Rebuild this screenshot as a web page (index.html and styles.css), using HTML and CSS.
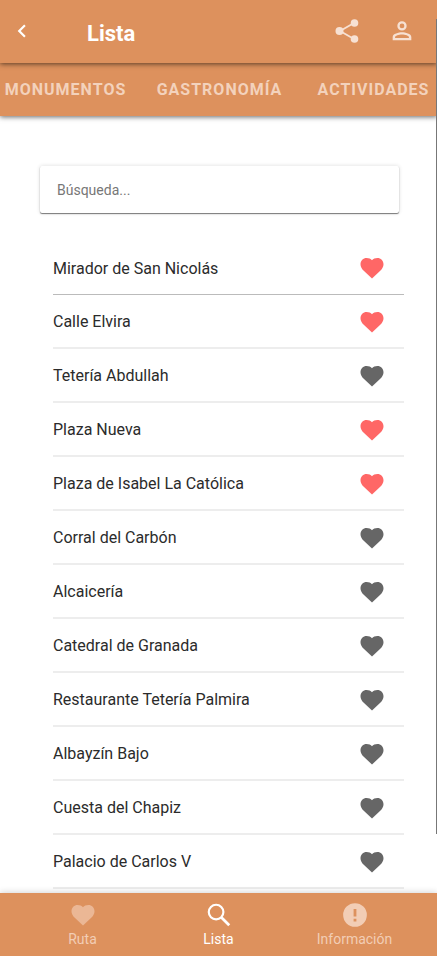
FILE: index.html
```html
<!DOCTYPE html>
<html lang="es">
<head>
<meta charset="utf-8">
<meta name="viewport" content="width=device-width, initial-scale=1">
<title>Lista</title>
<link rel="stylesheet" href="styles.css">
</head>
<body>
<svg class="defs" aria-hidden="true">
  <symbol id="heart" viewBox="0 0 28 28"><path d="M14 24.500L5.500 16.500C3.700 14.700 2.500 12.600 2.500 10.200C2.500 6.700 5.200 4 8.600 4C10.800 4 12.800 4.800 14 6.300C15.200 4.800 17.200 4 19.400 4C22.800 4 25.500 6.700 25.500 10.200C25.500 12.600 24.300 14.700 22.500 16.500Z"/></symbol>
</svg>
<div class="app">
  <header class="toolbar">
    <button class="icon-button" aria-label="Volver"><svg class="icon-back" viewBox="0 0 24 24"><path d="M15.41 7.41L14 6l-6 6 6 6 1.41-1.41L10.83 12z"/></svg></button>
    <h1 class="title">Lista</h1>
    <button class="icon-button" aria-label="Compartir"><svg class="icon-share" viewBox="0 0 24 24"><path d="M5 12L19 4M5 12l14 8" fill="none" stroke="currentColor" stroke-width="1.8"/><circle cx="4.5" cy="12" r="4"/><circle cx="19.5" cy="4" r="3.8"/><circle cx="19.5" cy="20" r="3.8"/></svg></button>
    <button class="icon-button" aria-label="Perfil"><svg class="icon-user" viewBox="0 0 24 24"><path fill-rule="evenodd" d="M12 3a4.3 4.3 0 110 8.6A4.3 4.3 0 0112 3zm0 2.1a2.2 2.2 0 100 4.4 2.2 2.2 0 000-4.4zM12 13.2c-3 0-8.6 1.4-8.6 4.3v3h17.2v-3c0-2.9-5.6-4.3-8.6-4.3zm0 2c3 0 6.4 1.3 6.4 2.3v1H5.6v-1c0-1 3.4-2.3 6.4-2.3z"/></svg></button>
  </header>
  <nav class="tabs" aria-label="Categorías">
    <button class="tab">MONUMENTOS</button>
    <button class="tab">GASTRONOMÍA</button>
    <button class="tab">ACTIVIDADES</button>
  </nav>
  <main class="content">
    <input class="search" type="search" placeholder="Búsqueda..." aria-label="Búsqueda">
    <ul class="places">
      <li class="place"><span>Mirador de San Nicolás</span><button class="like liked" aria-label="Favorito"><svg class="heart"><use href="#heart"/></svg></button></li>
      <li class="place"><span>Calle Elvira</span><button class="like liked" aria-label="Favorito"><svg class="heart"><use href="#heart"/></svg></button></li>
      <li class="place"><span>Tetería Abdullah</span><button class="like" aria-label="Favorito"><svg class="heart"><use href="#heart"/></svg></button></li>
      <li class="place"><span>Plaza Nueva</span><button class="like liked" aria-label="Favorito"><svg class="heart"><use href="#heart"/></svg></button></li>
      <li class="place"><span>Plaza de Isabel La Católica</span><button class="like liked" aria-label="Favorito"><svg class="heart"><use href="#heart"/></svg></button></li>
      <li class="place"><span>Corral del Carbón</span><button class="like" aria-label="Favorito"><svg class="heart"><use href="#heart"/></svg></button></li>
      <li class="place"><span>Alcaicería</span><button class="like" aria-label="Favorito"><svg class="heart"><use href="#heart"/></svg></button></li>
      <li class="place"><span>Catedral de Granada</span><button class="like" aria-label="Favorito"><svg class="heart"><use href="#heart"/></svg></button></li>
      <li class="place"><span>Restaurante Tetería Palmira</span><button class="like" aria-label="Favorito"><svg class="heart"><use href="#heart"/></svg></button></li>
      <li class="place"><span>Albayzín Bajo</span><button class="like" aria-label="Favorito"><svg class="heart"><use href="#heart"/></svg></button></li>
      <li class="place"><span>Cuesta del Chapiz</span><button class="like" aria-label="Favorito"><svg class="heart"><use href="#heart"/></svg></button></li>
      <li class="place"><span>Palacio de Carlos V</span><button class="like" aria-label="Favorito"><svg class="heart"><use href="#heart"/></svg></button></li>
    </ul>
  </main>
  <nav class="bottom" aria-label="Principal">
    <a class="bottom-link" href="#ruta"><svg class="nav-icon faint"><use href="#heart"/></svg>Ruta</a>
    <a class="bottom-link active" href="#lista"><svg class="nav-icon" viewBox="0 0 26 26"><circle cx="10.3" cy="10.3" r="6.8" fill="none" stroke="currentColor" stroke-width="2"/><path d="M15.3 15.3l7.2 7.2" fill="none" stroke="currentColor" stroke-width="2.6"/></svg>Lista</a>
    <a class="bottom-link" href="#informacion"><svg class="nav-icon" viewBox="0 0 26 26"><path fill-rule="evenodd" d="M13 2a11 11 0 100 22 11 11 0 000-22zM11.7 7.500h2.600v7h-2.600zM11.700 16.400h2.600V19h-2.600z"/></svg>Información</a>
  </nav>
  <div class="scroll-thumb"></div>
</div>
</body>
</html>
```

FILE: styles.css
```css
* {
  box-sizing: border-box;
}

body {
  margin: 0;
  font-family: Roboto, sans-serif;
  color: #2b2b2b;
  background: #fff;
}

button {
  margin: 0;
  padding: 0;
  border: 0;
  background: none;
  color: inherit;
  font: inherit;
}

svg {
  display: block;
  fill: currentColor;
}

.defs {
  position: absolute;
  width: 0;
  height: 0;
}

.app {
  position: relative;
  display: flex;
  flex-direction: column;
  height: 100vh;
  overflow: hidden;
}

.toolbar {
  z-index: 2;
  display: flex;
  align-items: center;
  flex: none;
  height: 63px;
  padding: 0 19px 2px 6px;
  gap: 23px;
  background: #dd915d;
  color: #f7e1d3;
  box-shadow: 0 1px 5px rgba(0, 0, 0, 0.6);
}

.icon-button {
  display: grid;
  place-items: center;
  width: 32px;
  height: 32px;
}

.icon-back {
  width: 26px;
  height: 26px;
  color: #fff;
}

.title {
  flex: 1;
  margin: 0;
  padding: 6px 0 0 26px;
  color: #fff;
  font-size: 22px;
  font-weight: 700;
  line-height: 28px;
}

.icon-share {
  width: 24px;
  height: 24px;
}

.icon-user {
  width: 26px;
  height: 26px;
}

.tabs {
  z-index: 1;
  display: grid;
  grid-template-columns: repeat(3, 154px);
  justify-content: center;
  flex: none;
  height: 53px;
  padding-left: 2px;
  background: #dd915d;
  box-shadow: 0 1px 5px rgba(0, 0, 0, 0.6);
}

.tab {
  color: #f3d2bc;
  font-size: 16px;
  font-weight: 700;
  letter-spacing: 1px;
}

.content {
  flex: 1;
  min-height: 0;
  padding: 50px 33px 0 40px;
  overflow: hidden;
}

.search {
  display: block;
  width: calc(100% - 5px);
  height: 47px;
  margin: 0 0 28px;
  padding: 0 17px;
  border: 0;
  border-radius: 2px;
  background: #fff;
  font: 14px Roboto, sans-serif;
  box-shadow: 0 1px 1px rgba(0, 0, 0, 0.5), 0 0 4px rgba(0, 0, 0, 0.14);
}

.search::placeholder {
  color: #777;
}

.places {
  margin: 0;
  padding: 0 0 0 13px;
  list-style: none;
}

.place {
  display: flex;
  align-items: center;
  justify-content: space-between;
  height: 54px;
  padding: 1px 18px 0 0;
  border-bottom: 2px solid #ededed;
  font-size: 16px;
}

.place:first-child {
  border-bottom: 1px solid #bbb;
}

.like {
  color: #666;
}

.liked {
  color: #ff6766;
}

.heart {
  width: 28px;
  height: 28px;
}

.bottom {
  z-index: 1;
  display: grid;
  grid-template-columns: repeat(3, 136px);
  justify-content: center;
  flex: none;
  height: 63px;
  background: #dd915d;
  box-shadow: 0 -1px 6px rgba(0, 0, 0, 0.16);
}

.bottom-link {
  display: flex;
  flex-direction: column;
  align-items: center;
  padding-top: 8px;
  gap: 1px;
  color: #f2cdb5;
  font-size: 14px;
  line-height: 18px;
  text-decoration: none;
}

.active {
  color: #fff;
}

.nav-icon {
  width: 28px;
  height: 28px;
}

.faint {
  color: #ebb795;
}

.scroll-thumb {
  position: absolute;
  z-index: 3;
  top: 19px;
  right: 0;
  bottom: 122px;
  width: 1px;
  background: #777;
}
```
